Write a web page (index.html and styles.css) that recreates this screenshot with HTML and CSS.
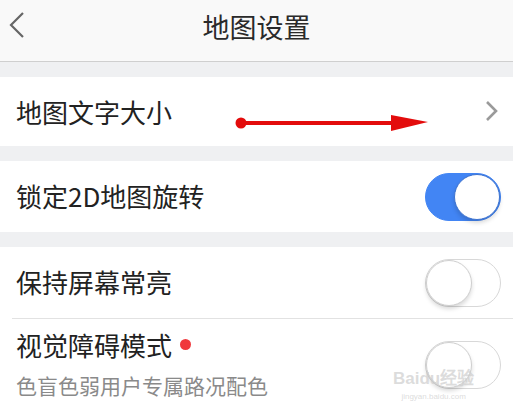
FILE: index.html
```html
<!DOCTYPE html>
<html lang="zh-CN">
<head>
  <meta charset="UTF-8">
  <title>地图设置</title>
  <meta name="viewport" content="width=device-width, initial-scale=1.0">
  <link rel="stylesheet" href="styles.css">
</head>
<body>

  <div class="topbar">
    <svg class="back" width="18" height="28" viewBox="0 0 18 28">
      <path d="M15 2 L3 14 L15 26" fill="none" stroke="#666" stroke-width="2.2"/>
    </svg>
    <div class="title">地图设置</div>
  </div>

  <div class="gap"></div>

  <div class="row row-link">
    <span class="label">地图文字大小</span>
    <svg class="more" width="14" height="22" viewBox="0 0 14 22">
      <path d="M2 2 L11 11 L2 20" fill="none" stroke="#9a9a9a" stroke-width="2.6"/>
    </svg>
    <svg class="arrow" width="200" height="24" viewBox="0 0 200 24">
      <line x1="6" y1="12" x2="160" y2="12" stroke="#e30c0c" stroke-width="4"/>
      <circle cx="6" cy="12" r="5.5" fill="#e30c0c"/>
      <polygon points="156,4 193,11 156,20" fill="#e30c0c"/>
    </svg>
  </div>

  <div class="gap"></div>

  <div class="row row-toggle">
    <span class="label">锁定2D地图旋转</span>
    <span class="switch on"><span class="knob"></span></span>
  </div>

  <div class="gap"></div>

  <div class="row row-toggle">
    <span class="label">保持屏幕常亮</span>
    <span class="switch"><span class="knob"></span></span>
  </div>

  <div class="divider"></div>

  <div class="row row-sub">
    <div class="texts">
      <span class="label">视觉障碍模式<span class="dot"></span></span>
      <span class="sub">色盲色弱用户专属路况配色</span>
    </div>
    <span class="switch"><span class="knob"></span></span>
    <div class="mark">
      <span class="mark-big">Bai<span class="paw">du</span>经验</span>
      <span class="mark-small">jingyan.baidu.com</span>
    </div>
  </div>

</body>
</html>
```

FILE: styles.css
```css
body {
  margin: 0;
  background: #fff;
  color: #222;
  font-family: "Noto Sans CJK SC", "Noto Sans", sans-serif;
}
.topbar {
  height: 61px;
  background: #f9f9f9;
  border-bottom: 1px solid #cfcfcf;
  display: flex;
  align-items: center;
  justify-content: center;
  position: relative;
}
.back {
  position: absolute;
  left: 8px;
  top: 11px;
}
.title {
  font-size: 27px;
  color: #2a2a2a;
  margin-top: -8px;
}
.gap {
  height: 15px;
  background: #eff0f2;
}
.row {
  display: flex;
  align-items: center;
  justify-content: space-between;
  padding: 0 12px 0 16px;
  background: #fff;
  position: relative;
}
.row-link { height: 69px; }
.row-toggle { height: 71px; }
.row-toggle .label { margin-top: -3px; }
.row-sub {
  height: 94px;
  align-items: flex-start;
}
.label {
  font-size: 26px;
  color: #222;
  display: flex;
  align-items: center;
}
.more {
  margin-right: 2px;
  margin-top: -2px;
}
.arrow {
  position: absolute;
  left: 235px;
  top: 34px;
}
.switch {
  width: 74px;
  height: 46px;
  border-radius: 24px;
  border: 1px solid #d8d8d8;
  background: #fff;
  position: relative;
  flex-shrink: 0;
}
.switch .knob {
  position: absolute;
  left: 0;
  top: 0;
  width: 44px;
  height: 44px;
  border-radius: 50%;
  background: #fff;
  border: 1px solid #cfcfcf;
  box-shadow: 0 3px 4px rgba(0, 0, 0, 0.15);
}
.switch.on {
  background: #4285f4;
  border-color: #4285f4;
}
.switch.on .knob {
  left: auto;
  right: 0;
  border-color: #3d73d0;
}
.divider {
  height: 1px;
  background: #e2e2e2;
  margin-left: 12px;
}
.texts {
  display: flex;
  flex-direction: column;
  padding-top: 7px;
}
.sub {
  font-size: 21px;
  color: #8a8a8a;
  margin-top: 7px;
}
.dot {
  width: 11px;
  height: 11px;
  border-radius: 50%;
  background: #f0383c;
  margin-left: 8px;
}
.row-sub .switch {
  margin-top: 22px;
}
.mark {
  position: absolute;
  left: 393px;
  top: 51px;
  display: flex;
  flex-direction: column;
  align-items: center;
  color: rgba(205, 205, 205, 0.7);
  font-family: "Liberation Sans", sans-serif;
  line-height: 1;
}
.mark-big {
  font-size: 17px;
  font-weight: bold;
}
.mark-small {
  font-size: 8px;
  margin-top: 6px;
}
```
